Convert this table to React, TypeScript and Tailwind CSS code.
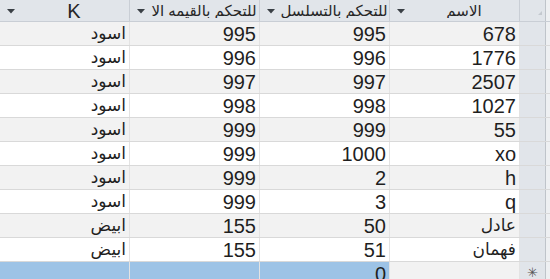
import React from 'react';

interface Row {
  name: string;
  seq: string;
  val: string;
  k: string;
}

const rows: Row[] = [
  { name: '678', seq: '995', val: '995', k: 'اسود' },
  { name: '1776', seq: '996', val: '996', k: 'اسود' },
  { name: '2507', seq: '997', val: '997', k: 'اسود' },
  { name: '1027', seq: '998', val: '998', k: 'اسود' },
  { name: '55', seq: '999', val: '999', k: 'اسود' },
  { name: 'xo', seq: '1000', val: '999', k: 'اسود' },
  { name: 'h', seq: '2', val: '999', k: 'اسود' },
  { name: 'q', seq: '3', val: '999', k: 'اسود' },
  { name: 'عادل', seq: '50', val: '155', k: 'ابيض' },
  { name: 'فهمان', seq: '51', val: '155', k: 'ابيض' },
];

const isArabic = (s: string) => /[\u0600-\u06FF]/.test(s);

const Arrow = () => (
  <svg width="8" height="5" viewBox="0 0 8 5" className="shrink-0">
    <path d="M0 0H8L4 4.5Z" fill="#3a3f45" />
  </svg>
);

const HeaderCell = ({ label }: { label: string }) => (
  <div className="w-[130px] h-full flex items-center border-r border-[#c9ced5] overflow-hidden">
    <div className="w-[20px] flex justify-center pl-[1px] pt-[2px]">
      <Arrow />
    </div>
    <div
      dir="rtl"
      className={`flex-1 overflow-hidden whitespace-nowrap text-center pr-[1px] text-[#262626] ${
        isArabic(label) ? 'text-[15px]' : 'text-[20px]'
      }`}
    >
      {label}
    </div>
  </div>
);

const Cell = ({ value, bg }: { value: string; bg: string }) => (
  <div
    dir="rtl"
    className={`w-[130px] h-full flex items-center pr-[3px] border-r border-[#e3e3e3] whitespace-nowrap overflow-hidden text-[#1f1f1f] ${bg} ${
      isArabic(value) ? 'text-[17px]' : 'text-[20px]'
    }`}
  >
    {value}
  </div>
);

const App = () => {
  return (
    <div
      className="w-[550px] h-[279px] overflow-hidden bg-white leading-none"
      style={{ fontFamily: '"Liberation Sans", "DejaVu Sans", Arial, sans-serif' }}
    >
      {/* Header */}
      <div className="flex h-[22px] bg-[#e1e5ea] border-b border-[#c9ced5]">
        <HeaderCell label="K" />
        <HeaderCell label="للتحكم بالقيمه الا" />
        <HeaderCell label="للتحكم بالتسلسل" />
        <HeaderCell label="الاسم" />
        <div className="w-[26px] h-full relative border-r border-[#bfc4ca]">
          <div className="absolute right-[3px] bottom-[6px] w-0 h-0 border-l-[4px] border-l-transparent border-b-[4px] border-b-[#c4c9cf]" />
        </div>
        <div className="flex-1 bg-[#eef0f2]" />
      </div>

      {/* Rows */}
      {rows.map((r, i) => {
        const bg = i % 2 === 0 ? 'bg-[#f2f2f2]' : 'bg-white';
        return (
          <div key={i} className="flex h-[24px] border-b border-[#d9d9d9]">
            <Cell value={r.k} bg={bg} />
            <Cell value={r.val} bg={bg} />
            <Cell value={r.seq} bg={bg} />
            <Cell value={r.name} bg={bg} />
            <div className="w-[26px] h-full bg-[#e1e5ea] border-r border-[#bfc4ca]" />
            <div className="flex-1 bg-[#eef0f2]" />
          </div>
        );
      })}

      {/* New record row */}
      <div className="flex h-[24px]">
        <Cell value="" bg="bg-[#9dc3e6]" />
        <Cell value="" bg="bg-[#9dc3e6]" />
        <Cell value="0" bg="bg-[#9dc3e6]" />
        <Cell value="" bg="bg-[#f2f2f2]" />
        <div className="w-[26px] h-[17px] bg-[#e1e5ea] border-r border-[#bfc4ca] flex items-end justify-center text-[13px] text-[#555]">
          ✳
        </div>
        <div className="flex-1 bg-[#eef0f2]" />
      </div>
    </div>
  );
};

export default App;
